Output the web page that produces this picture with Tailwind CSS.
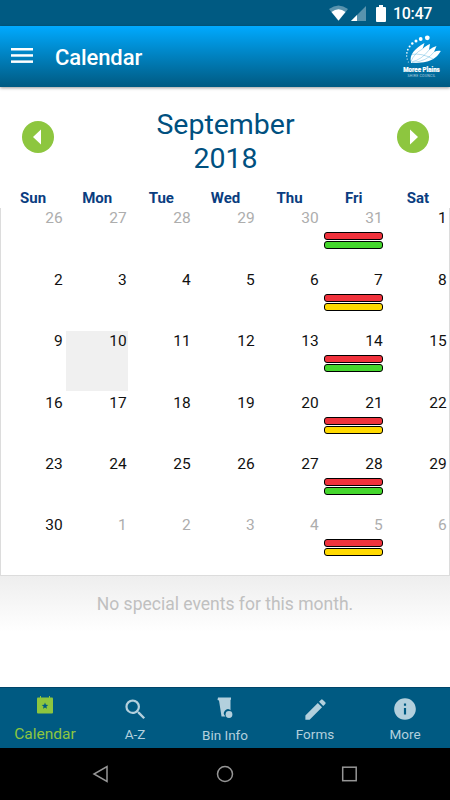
<!DOCTYPE html>
<html lang="en">
<head>
    <meta charset="UTF-8">
    <meta name="viewport" content="width=device-width, initial-scale=1.0">
    <title>Calendar</title>
    <script src="https://cdn.jsdelivr.net/npm/@tailwindcss/browser@4"></script>
</head>
<body class="bg-white font-['Roboto',sans-serif]">
    <div class="w-[450px] h-[800px] flex flex-col overflow-hidden">
        <!-- Status bar -->
        <div class="h-[26px] shrink-0 bg-[#005a82] flex items-center justify-end pr-[17px] text-white">
            <svg class="w-[19px] h-[16px]" viewBox="0 0 19 16">
                <path d="M0 4Q9.500 -3 19 4L9.500 16Z" fill="#fff" fill-opacity=".35"/>
                <path d="M2.500 7Q9.500 1.500 16.500 7L9.500 15.500Z" fill="#fff"/>
            </svg>
            <svg class="w-[15px] h-[15px] ml-[3px]" viewBox="0 0 15 15">
                <path d="M15 0V15H0Z" fill="#fff" fill-opacity=".35"/>
                <path d="M6 9V15H0Z" fill="#fff"/>
            </svg>
            <svg class="w-[10px] h-[17px] ml-[10px]" viewBox="0 0 10 17">
                <path d="M3 0H7V2H9Q10 2 10 3V16Q10 17 9 17H1Q0 17 0 16V3Q0 2 1 2H3Z" fill="#fff"/>
            </svg>
            <span class="ml-[7px] mt-[2px] text-[16px] leading-none font-medium w-[40px] whitespace-nowrap tracking-[-0.3px]">10:47</span>
        </div>

        <!-- Header -->
        <header class="relative z-10 h-[61px] shrink-0 bg-linear-to-b from-[#00aaff] to-[#005a82] shadow-[0_1px_3px_rgba(0,0,0,0.4)] flex items-center pl-[11px] pr-[7px]">
            <svg class="w-[22px] h-[15px] -mt-[2px]" viewBox="0 0 22 15" fill="#fff">
                <rect y="0" width="22" height="2.500"/>
                <rect y="6.200" width="22" height="2.500"/>
                <rect y="12.400" width="22" height="2.500"/>
            </svg>
            <h1 class="ml-[22px] mt-[2px] text-[22px] leading-none font-medium tracking-[-0.1px] text-white">Calendar</h1>
            <svg class="ml-auto w-[44px] h-[48px] overflow-visible" viewBox="399 32.500 44 48">
                <g fill="#fff">
                    <circle cx="427.300" cy="37.300" r="2.400"/>
                    <circle cx="420.700" cy="38.500" r="1.900"/>
                    <circle cx="416" cy="40.500" r="1.500"/>
                    <circle cx="412.300" cy="43" r="1.200"/>
                    <circle cx="409.600" cy="46" r="1"/>
                    <circle cx="407.800" cy="49.200" r=".9"/>
                    <circle cx="406.900" cy="52.400" r=".8"/>
                    <circle cx="406.700" cy="55.500" r=".7"/>
                    <circle cx="407.200" cy="58.600" r=".6"/>
                    <circle cx="408.300" cy="61.500" r=".5"/>
                    <path d="M411 62C409 54 415 48 424.500 42.500C423.800 45 423 47 422.500 48.500C425 46 427.500 44.500 430 43.500L429 49.500C431.500 47.500 434 46.300 436.500 45.500L434 51.500C436.500 50.300 438.500 50 440.800 50.500C436.500 58 430 62.800 411 62.500Z"/>
                </g>
                <path d="M411 61Q414 53 422.500 48.500M411.500 61.500Q422 59 429 49.500M412 62Q427 61 434 51.500M411 54Q422 52 434 59" fill="none" stroke="#0b8fd0" stroke-width=".3"/>
                <text x="421.500" y="71" text-anchor="middle" font-size="7.200" font-weight="900" textLength="36.500" lengthAdjust="spacingAndGlyphs" fill="#fff" stroke="#fff" stroke-width=".2">Moree Plains</text>
                <text x="421.500" y="76" text-anchor="middle" font-size="3.500" textLength="28" fill="#fff" fill-opacity=".7">SHIRE COUNCIL</text>
            </svg>
        </header>

        <main class="grow flex flex-col">
            <!-- Month switcher -->
            <div class="h-[102px] shrink-0 flex justify-between px-[22px]">
                <button class="mt-[34px] w-[32px] h-[32px] rounded-full bg-[#8dc63f]" aria-label="Previous month">
                    <svg class="w-[32px] h-[32px]" viewBox="0 0 32 32"><path d="M19 8.500V23.500L11 16Z" fill="#fff"/></svg>
                </button>
                <h2 class="mt-[21px] text-[28.500px] leading-[34px] text-center text-[#00507f]">September<br>2018</h2>
                <button class="mt-[34px] w-[32px] h-[32px] -mr-[1px] rounded-full bg-[#8dc63f]" aria-label="Next month">
                    <svg class="w-[32px] h-[32px]" viewBox="0 0 32 32"><path d="M13 8.500V23.500L21 16Z" fill="#fff"/></svg>
                </button>
            </div>

            <div class="h-[19px] shrink-0 grid grid-cols-7 pl-px text-center text-[15px] leading-[18px] font-bold text-[#0a3d80]">
                <span>Sun</span><span>Mon</span><span>Tue</span><span>Wed</span><span>Thu</span><span>Fri</span><span>Sat</span>
            </div>

            <div id="days" class="h-[368px] shrink-0 grid grid-cols-7 grid-rows-[62px_repeat(4,61.3px)_60px] border-b border-l border-r border-[#dcdcdc] text-[15.500px] leading-[18px] tracking-[0.2px]"></div>

            <div class="h-[56px] shrink-0 bg-linear-to-b from-[#eeeeee] to-white pt-[17px] text-center text-[17.500px] leading-[22px] text-[#c0c0c0]">No special events for this month.</div>
        </main>

        <!-- Tabs -->
        <nav class="h-[61px] shrink-0 grid grid-cols-5 bg-[#005a82] border-t border-[#00466a] text-[13.500px] leading-[16px] text-[#b3d0dd]">
            <a class="flex flex-col items-center text-[#8dc63f]">
                <svg class="mt-[7px] w-[18px] h-[20px]" viewBox="0 0 18 20">
                    <path d="M4.500 1V4M13.500 1V4" stroke="#8dc63f" stroke-width="1"/>
                    <rect x="1" y="2.500" width="16" height="16" rx="1" fill="#8dc63f"/>
                    <path d="M9 7.600L9.900 9.800L12.200 10L10.400 11.500L11 13.700L9 12.500L7 13.700L7.600 11.500L5.800 10L8.100 9.800Z" fill="#005a82"/>
                </svg>
                <span class="mt-[10px] text-[15.500px] leading-[18px]">Calendar</span>
            </a>
            <a class="flex flex-col items-center">
                <svg class="mt-[8px] w-[27px] h-[27px]" viewBox="0 0 24 24" fill="currentColor">
                    <path d="M15.500 14h-.79l-.28-.27A6.471 6.471 0 0 0 16 9.500 6.500 6.500 0 1 0 9.500 16c1.610 0 3.090-.59 4.230-1.570l.27.28v.79l5 4.990L20.490 19l-4.990-5zm-6 0C7.010 14 5 11.990 5 9.500S7.010 5 9.500 5 14 7.010 14 9.500 11.990 14 9.500 14z"/>
                </svg>
                <span class="mt-[3px]">A-Z</span>
            </a>
            <a class="flex flex-col items-center">
                <svg class="mt-[9px] w-[16px] h-[23px]" viewBox="0 0 16 23" fill="currentColor">
                    <path d="M1 .5H14V2.500L13.500 3V13.200A4 4 0 0 0 8.500 19.500H4.500L2 3.500L.5 3Z"/>
                    <circle cx="12" cy="17.500" r="3.400"/>
                </svg>
                <span class="mt-[7px]">Bin Info</span>
            </a>
            <a class="flex flex-col items-center">
                <svg class="mt-[8px] w-[27px] h-[27px]" viewBox="0 0 24 24" fill="currentColor">
                    <path d="M3 17.250V21h3.750L17.810 9.940l-3.750-3.750L3 17.250zM20.710 7.040a.996.996 0 0 0 0-1.410l-2.340-2.340a.996.996 0 0 0-1.410 0l-1.830 1.830 3.750 3.750 1.830-1.830z"/>
                </svg>
                <span class="mt-[3px]">Forms</span>
            </a>
            <a class="flex flex-col items-center">
                <svg class="mt-[8px] w-[26px] h-[26px]" viewBox="0 0 24 24" fill="currentColor">
                    <path d="M12 2C6.480 2 2 6.480 2 12s4.480 10 10 10 10-4.480 10-10S17.520 2 12 2zm1 15h-2v-6h2v6zm0-8h-2V7h2v2z"/>
                </svg>
                <span class="mt-[4px]">More</span>
            </a>
        </nav>

        <!-- System navigation -->
        <div class="h-[52px] shrink-0 bg-black flex items-center justify-center">
            <svg class="w-[450px] h-[52px]" viewBox="0 0 450 52" fill="none" stroke="#969696" stroke-width="1.500">
                <path d="M107 18.500V33.500L94 26Z"/>
                <circle cx="225" cy="26" r="7.500"/>
                <rect x="342.700" y="19.200" width="13.500" height="13.500"/>
            </svg>
        </div>
    </div>

    <script>
        const grid = document.getElementById('days');
        const start = new Date(2018, 7, 26);

        for (let i = 0; i < 42; i++) {
            const day = new Date(start.getFullYear(), start.getMonth(), start.getDate() + i);
            const inMonth = day.getMonth() === 8;
            const isToday = inMonth && day.getDate() === 10;
            const cell = document.createElement('div');
            cell.className = 'pr-[2px] pt-[1px] text-right ' + (inMonth ? 'text-[#111111]' : 'text-[#adadad]');

            let html = `<div>${day.getDate()}</div>`;
            if (isToday) {
                cell.className = 'w-[62px] h-[60px] ml-[1px] pr-[1px] pt-[1px] text-right text-[#111111] bg-[#f0f0f0]';
            }
            // Bin collection every Friday, recycling and green waste alternate
            if (day.getDay() === 5) {
                const second = Math.floor(i / 7) % 2 === 0 ? 'bg-[#44d62c]' : 'bg-[#ffd900]';
                html += `<div class="mt-[5px] ml-[3px] w-[59px] h-[8px] rounded-[3px] border border-black bg-[#f0323c]"></div>
                    <div class="mt-[1px] ml-[3px] w-[59px] h-[8px] rounded-[3px] border border-black ${second}"></div>`;
            }
            cell.innerHTML = html;
            grid.appendChild(cell);
        }
    </script>
</body>
</html>
